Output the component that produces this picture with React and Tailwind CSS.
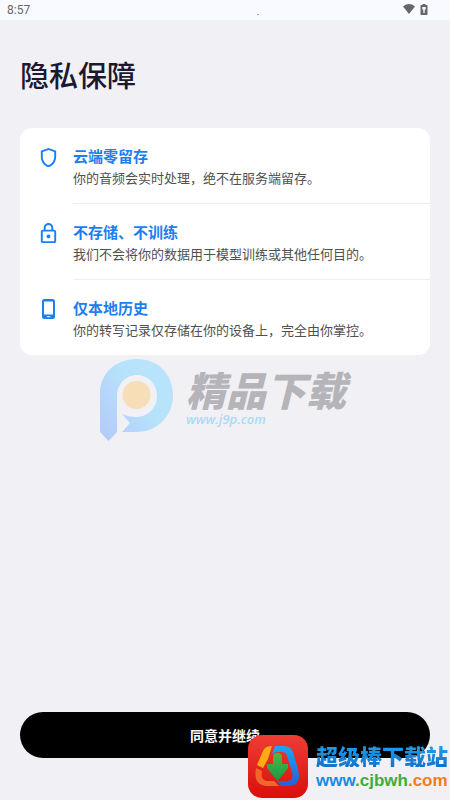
import { MdOutlineShield, MdOutlineLock } from 'react-icons/md';

function PhoneIcon() {
  return (
    <svg viewBox="0 0 23 23" width="23" height="23" fill="currentColor" aria-hidden="true">
      <path fillRule="evenodd" d="M7.500 1h8a2.500 2.500 0 0 1 2.500 2.500v15a2.500 2.500 0 0 1-2.500 2.500h-8A2.500 2.500 0 0 1 5 18.500v-15A2.500 2.500 0 0 1 7.500 1ZM7 3.500v13h9v-13ZM9.800 18.200v1h3.400v-1Z" />
    </svg>
  );
}

const promises = [
  { icon: <MdOutlineShield size={23} />, title: '云端零留存', text: '你的音频会实时处理，绝不在服务端留存。' },
  { icon: <MdOutlineLock size={23} />, title: '不存储、不训练', text: '我们不会将你的数据用于模型训练或其他任何目的。' },
  { icon: <PhoneIcon />, title: '仅本地历史', text: '你的转写记录仅存储在你的设备上，完全由你掌控。' },
];

function StatusBar() {
  return (
    <header className="relative flex h-5 items-center justify-between bg-[#f8faff] pl-[7px] pr-[22px] text-[#65676c]">
      <span className="font-[Roboto,sans-serif] text-xs">8:57</span>
      <span className="absolute left-[257px] top-[14px] h-px w-[2px] bg-[#55c5d0]" />
      <div className="flex items-center gap-[5px] pb-[2px]">
        <svg viewBox="0 0 12 10" className="h-[10px] w-3" fill="currentColor" aria-hidden="true">
          <path d="M0 2.500Q6-2.300 12 2.500L6 10Z" />
        </svg>
        <svg viewBox="0 0 8 11" className="h-[11px] w-2" fill="currentColor" aria-hidden="true">
          <path fillRule="evenodd" d="M2.500 0h3v1H7q.5 0 .5.5v9q0 .5-.5.5H1q-.5 0-.5-.5v-9Q.5 1 1 1h1.500ZM2.300 3v2.600h1V9h1.400V5.600h1V3Z" />
        </svg>
      </div>
    </header>
  );
}

function J9Mark() {
  return (
    <div className="flex items-start text-[#b4b4b9]">
      <svg viewBox="0 0 74 82" className="h-[82px] w-[74px]" aria-hidden="true">
        <defs>
          <linearGradient id="j9" x1="0" y1="1" x2="1" y2="0.200">
            <stop offset="0" stopColor="#b3c8fa" />
            <stop offset="0.600" stopColor="#b7e2fb" />
            <stop offset="1" stopColor="#b9e4fc" />
          </linearGradient>
        </defs>
        <path fill="url(#j9)" d="M0 73V34C0 14 16 0 37 0s36 15 36 36-16 37-36 37H22l8-9-8-9c4 2 9 3 14 3 12 0 21-9 21-21S48 16 37 16 17 25 17 37v36l-8.500 9Z" />
        <circle cx="36.500" cy="36" r="14" fill="#f7deb6" />
      </svg>
      <div className="pl-3 pt-[10px]">
        <p className="font-['Noto_Sans_CJK_SC',sans-serif] text-[40px] font-black italic leading-10">精品下载</p>
        <p className="font-['Open_Sans',sans-serif] text-[13px] font-semibold italic leading-5 text-[#a8dcf6]">www.j9p.com</p>
      </div>
    </div>
  );
}

function SiteBadge() {
  return (
    <div className="absolute bottom-0 right-0 flex items-center gap-2 pr-[2px] pb-[2px]">
      <svg viewBox="0 0 60 63" className="h-[63px] w-[60px]" aria-hidden="true">
        <defs>
          <linearGradient id="tile" x1="0" y1="0" x2="0" y2="1">
            <stop offset="0" stopColor="#ee3d35" />
            <stop offset="1" stopColor="#d90f0c" />
          </linearGradient>
          <linearGradient id="arc" x1="0" y1="0" x2="0" y2="1">
            <stop offset="0" stopColor="#1ba6f2" />
            <stop offset="1" stopColor="#2560d8" />
          </linearGradient>
          <linearGradient id="arrow" x1="0" y1="0" x2="0" y2="1">
            <stop offset="0" stopColor="#4cba3c" />
            <stop offset="1" stopColor="#149a4c" />
          </linearGradient>
        </defs>
        <rect width="60" height="63" rx="14" fill="url(#tile)" />
        <path fill="#ffab12" d="M24 11L20 24 15 33 9 30 15 16Q17 11 24 11Z" />
        <path fill="url(#arc)" d="M27 11H36Q43 11 45 17L50 34Q54 50 42 51H33L29 46H40Q46 45 44 37L39 21Q38 17 34 17H29L24 19Z" />
        <path fill="#f4652c" d="M8 33L14 36Q12 45 19 46H26L31 51H18Q5 50 8 33Z" />
        <path fill="url(#arrow)" d="M25 22Q25 18 29.500 18T34 22V29H40V33L29.500 46 19 33V29H25Z" />
      </svg>
      <div className="pt-1 font-['Noto_Sans_CJK_SC',sans-serif] font-black">
        <p className="bg-gradient-to-b from-[#25a5f0] to-[#0f72cc] bg-clip-text text-[22px] leading-6 text-transparent">超级棒下载站</p>
        <p className="font-['Liberation_Sans',sans-serif] text-[17px] leading-7 font-bold text-[#168ce0]">
          www<span className="text-[#3fae3a]">.cjbwh</span><span className="text-[#f47b20]">.com</span>
        </p>
      </div>
    </div>
  );
}

export default function App() {
  return (
    <div className="relative flex min-h-screen flex-col bg-[#f1f0f5] font-['Noto_Sans_CJK_SC',sans-serif]">
      <StatusBar />
      <main className="flex flex-1 flex-col px-5 pb-[42px]">
        <h1 className="pt-8 text-[29px] font-medium leading-[44px] text-[#1b1930]">隐私保障</h1>
        <ul className="mt-8 rounded-xl bg-white">
          {promises.map((item, i) => (
            <li key={item.title} className="flex pl-[17px]">
              <span className="w-9 pt-[18px] text-[#1a7ff0]">{item.icon}</span>
              <div className={i < promises.length - 1 ? 'flex-1 border-b border-[#eeeef0] pt-[17px] pb-[14px]' : 'flex-1 pt-[17px] pb-[14px]'}>
                <h2 className="text-[15px] font-bold leading-[22px] text-[#1a7ff0]">{item.title}</h2>
                <p className="text-[13px] leading-[22px] text-[#505050]">{item.text}</p>
              </div>
            </li>
          ))}
        </ul>
        <div className="flex justify-center pt-1 pr-1">
          <J9Mark />
        </div>
        <button type="button" className="mt-auto h-[46px] w-full rounded-full bg-black text-[14px] font-bold text-white">同意并继续</button>
      </main>
      <SiteBadge />
    </div>
  );
}
